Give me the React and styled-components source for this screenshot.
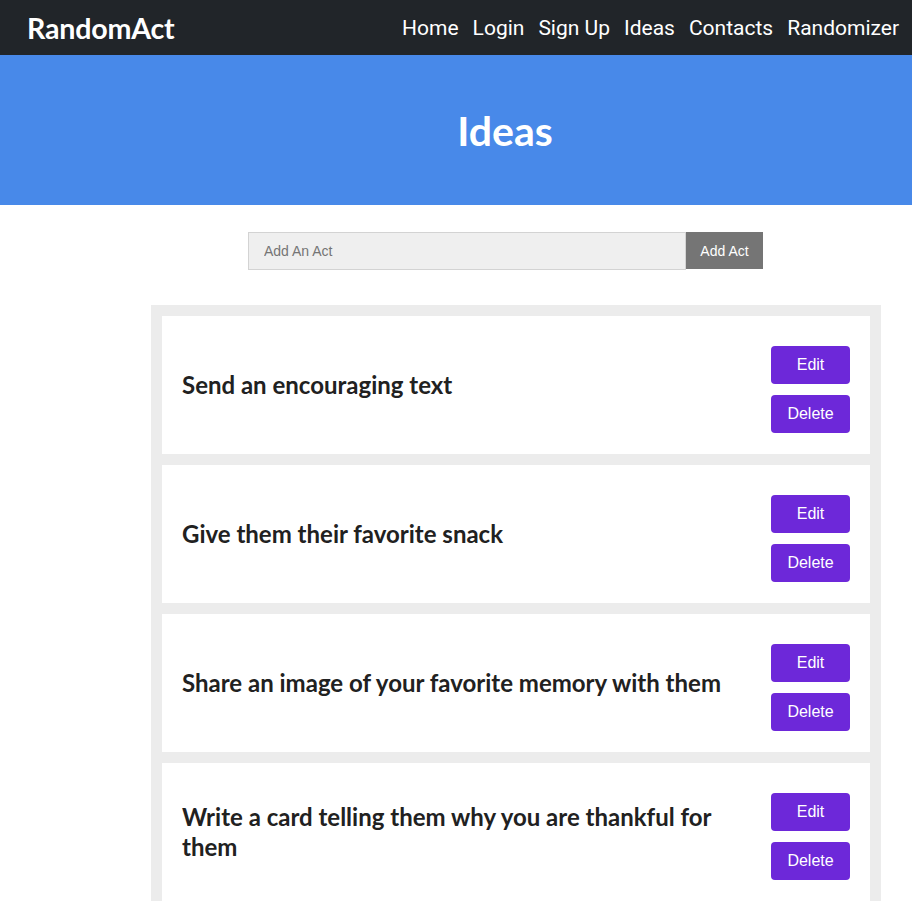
import React from "react";
import styled, { createGlobalStyle } from "styled-components";

const Global = createGlobalStyle`
  body { margin: 0; background: #fff; font-family: "Liberation Sans", Arial, sans-serif; }
  * { box-sizing: border-box; }
`;

const Nav = styled.nav`
  height: 55px;
  background: #212529;
  display: flex;
  align-items: center;
  justify-content: space-between;
  padding: 0 13px 0 27px;
`;

const Brand = styled.div`
  font-family: Lato, sans-serif;
  font-weight: 700;
  font-size: 28.6px;
  color: #fff;
  letter-spacing: -0.2px;
`;

const Links = styled.div`
  display: flex;
  gap: 14px;
`;

const NavLink = styled.a`
  font-family: Roboto, sans-serif;
  font-size: 21px;
  color: #fff;
  text-decoration: none;
`;

const Hero = styled.header`
  height: 150px;
  background: #4889e9;
  display: flex;
  align-items: center;
  justify-content: center;
  padding-left: 98px;
`;

const HeroTitle = styled.h1`
  margin: 0;
  font-family: Lato, sans-serif;
  font-weight: 700;
  font-size: 41px;
  color: #fff;
`;

const Main = styled.main`
  display: flex;
  flex-direction: column;
  align-items: flex-start;
`;

const Form = styled.form`
  display: flex;
  margin: 27px 0 0 248px;
  height: 38px;
`;

const Input = styled.input`
  width: 438px;
  height: 38px;
  background: #efefef;
  border: 1px solid #d3d3d3;
  padding: 0 15px;
  font-family: "Liberation Sans", Arial, sans-serif;
  font-size: 14px;
  color: #333;
  outline: none;
  &::placeholder { color: #757575; }
`;

const AddButton = styled.button`
  width: 77px;
  height: 37px;
  background: #757575;
  border: none;
  color: #fff;
  font-family: "Liberation Sans", Arial, sans-serif;
  font-size: 14px;
  padding: 0;
`;

const List = styled.section`
  margin: 35px 0 0 151px;
  width: 730px;
  background: #ececec;
  padding: 11px 11px 0;
  display: flex;
  flex-direction: column;
  gap: 11px;
`;

const Card = styled.article`
  background: #fff;
  min-height: 138px;
  display: flex;
  align-items: center;
  justify-content: space-between;
  padding: 0 20px;
  gap: 40px;
`;

const CardText = styled.h3`
  margin: 0;
  font-family: Lato, sans-serif;
  font-weight: 700;
  font-size: 24px;
  line-height: 30px;
  color: #212121;
  max-width: 560px;
`;

const Actions = styled.div`
  display: flex;
  flex-direction: column;
  gap: 11px;
  padding: 9px 0 0;
  flex-shrink: 0;
`;

const ActionButton = styled.button`
  width: 79px;
  height: 38px;
  background: #6d28d9;
  border: none;
  border-radius: 4px;
  color: #fff;
  font-family: "Liberation Sans", Arial, sans-serif;
  font-size: 16px;
  padding: 0;
`;

const ideas = [
  "Send an encouraging text",
  "Give them their favorite snack",
  "Share an image of your favorite memory with them",
  "Write a card telling them why you are thankful for them",
];

export default function App() {
  return (
    <>
      <Global />
      <Nav>
        <Brand>RandomAct</Brand>
        <Links>
          {["Home", "Login", "Sign Up", "Ideas", "Contacts", "Randomizer"].map((l) => (
            <NavLink key={l} href="#">{l}</NavLink>
          ))}
        </Links>
      </Nav>
      <Hero>
        <HeroTitle>Ideas</HeroTitle>
      </Hero>
      <Main>
        <Form onSubmit={(e) => e.preventDefault()}>
          <Input placeholder="Add An Act" />
          <AddButton type="submit">Add Act</AddButton>
        </Form>
        <List>
          {ideas.map((t) => (
            <Card key={t}>
              <CardText>{t}</CardText>
              <Actions>
                <ActionButton>Edit</ActionButton>
                <ActionButton>Delete</ActionButton>
              </Actions>
            </Card>
          ))}
        </List>
      </Main>
    </>
  );
}
